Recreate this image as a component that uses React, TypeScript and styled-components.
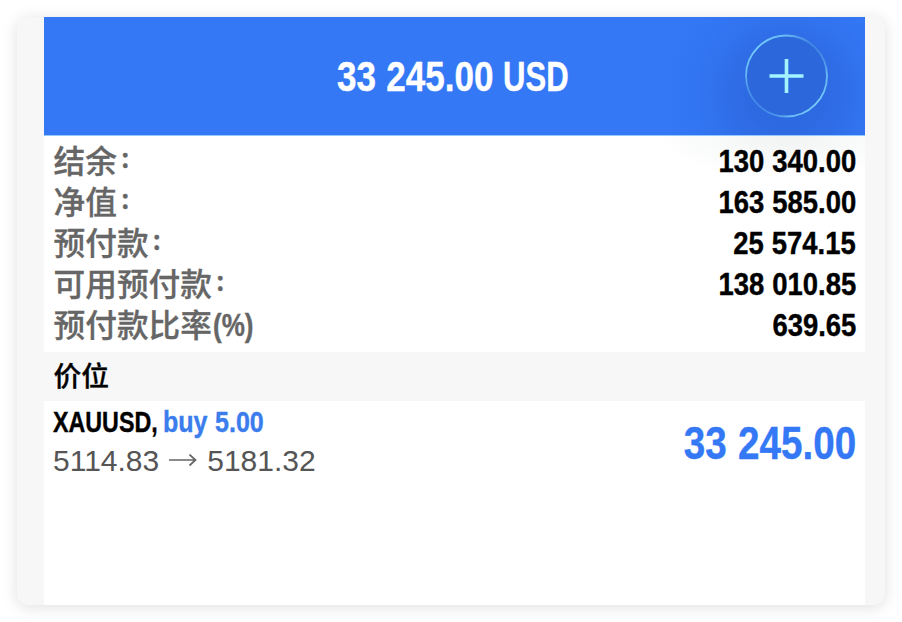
import React from 'react';
import styled, { createGlobalStyle } from 'styled-components';

const GlobalStyle = createGlobalStyle`
  * { box-sizing: border-box; }
  body { margin: 0; background: #fff; font-family: "Liberation Sans", "Noto Sans CJK SC", sans-serif; }
`;

const Page = styled.div`
  width: 902px;
  height: 622px;
  padding: 17px;
  overflow: hidden;
`;

const Card = styled.main`
  width: 868px;
  height: 588px;
  padding: 0 20px 0 27px;
  border-radius: 12px;
  background: #f7f7f7;
  box-shadow: 0 2px 16px rgba(0, 0, 0, 0.13);
`;

const Screen = styled.div`
  height: 588px;
  background: #fff;
`;

const Header = styled.header`
  display: grid;
  grid-template-columns: 150px 1fr 150px;
  align-items: center;
  height: 119px;
  border-bottom: 1px solid #93c8ff;
  background: radial-gradient(circle at 742px 76px, #2c68de 0, #2d69e0 30px, #2f6de7 56px, #3274f0 84px, #3478f6 120px);
`;

const Condensed = styled.span<{ $size: number; $scale: number; $origin?: string; $color?: string; $width?: number }>`
  display: inline-block;
  width: ${p => (p.$width ? `${p.$width}px` : 'auto')};
  font: bold ${p => p.$size}px/1 "Liberation Sans", sans-serif;
  color: ${p => p.$color ?? '#000'};
  white-space: pre;
  word-spacing: 0.6px;
  -webkit-text-stroke: 0.4px currentColor;
  transform: scaleX(${p => p.$scale});
  transform-origin: ${p => p.$origin ?? 'left'} center;
`;

const Title = styled.h1`
  grid-column: 2;
  margin: 1px 0 0 -11px;
  display: flex;
  justify-content: center;
  gap: 9px;
`;

const AddButton = styled.button`
  justify-self: end;
  width: 84px;
  height: 84px;
  margin-right: 36px;
  padding: 0;
  border: 0;
  background: none;
  svg { display: block; }
`;

const Summary = styled.section`
  height: 216px;
  padding: 5px 9px 0;
  background: radial-gradient(ellipse 130px 42px at 742px 0, #f1f3f3, #fff);
`;

const SummaryRow = styled.div`
  display: flex;
  justify-content: space-between;
  align-items: center;
  height: 41px;
`;

const Label = styled.span`
  display: flex;
  align-items: center;
  margin: -5px 0 0 0.5px;
  font: 500 31.7px/32px "Noto Sans CJK SC", sans-serif;
  color: #666;
  -webkit-text-stroke: 0.3px currentColor;
`;

const Suffix = styled.span`
  display: flex;
  margin: 4px 0 0 1px;
`;

const Colon = styled.span`
  margin: -2px 0 0 3px;
  font-size: 21px;
  font-weight: 900;
  line-height: 28px;
`;

const SectionTitle = styled.h2`
  height: 49px;
  margin: 0;
  padding: 0 9.5px;
  background: #f7f7f7;
  font: 500 27.8px/45px "Noto Sans CJK SC", sans-serif;
  color: #000;
  -webkit-text-stroke: 0.3px currentColor;
`;

const Position = styled.section`
  display: flex;
  justify-content: space-between;
  align-items: center;
  height: 84px;
  padding: 0 9px;
`;

const Details = styled.div`
  display: flex;
  flex-direction: column;
  margin-top: -4px;
`;

const Line = styled.div`
  display: flex;
  align-items: center;
  height: 39px;
`;

const Symbol = styled(Line)`
  gap: 5px;
`;

const Prices = styled(Line)`
  gap: 10px;
  font-size: 30px;
  color: #555;
`;

const rows = [
  { label: '结余', value: '130 340.00' },
  { label: '净值', value: '163 585.00' },
  { label: '预付款', value: '25 574.15' },
  { label: '可用预付款', value: '138 010.85' },
  { label: '预付款比率', suffix: '(%)', value: '639.65' },
];

const PlusCircle = () => (
  <svg width="84" height="84" viewBox="0 0 84 84" fill="none">
    <defs>
      <linearGradient id="ring" x1="12" y1="72" x2="72" y2="12" gradientUnits="userSpaceOnUse">
        <stop offset="0" stopColor="#3d82e6" />
        <stop offset=".2" stopColor="#69bdf5" />
        <stop offset=".5" stopColor="#78cefa" />
        <stop offset=".85" stopColor="#66b9f4" />
        <stop offset="1" stopColor="#397bdf" />
      </linearGradient>
    </defs>
    <circle cx="41.500" cy="42" r="40.500" fill="#2c67dc" stroke="url(#ring)" strokeWidth="1.8" />
    <path d="M24.500 42h34M41.500 25v34" stroke="#a3f4ff" strokeWidth="3.6" />
  </svg>
);

const Arrow = () => (
  <svg width="28" height="14" viewBox="0 0 28 14" fill="none" stroke="#666" strokeWidth="1.7">
    <path d="M0 6h26.500M20.500 .5l6 5.500l-6 5.500" />
  </svg>
);

export default function App() {
  return (
    <>
      <GlobalStyle />
      <Page>
        <Card>
          <Screen>
            <Header>
              <Title>
                <Condensed $size={42} $scale={0.835} $origin="right" $color="#fff">33 245.00</Condensed>
                <Condensed $size={42} $scale={0.74} $color="#fff">USD</Condensed>
              </Title>
              <AddButton aria-label="add"><PlusCircle /></AddButton>
            </Header>
            <Summary>
              {rows.map(row => (
                <SummaryRow key={row.label}>
                  <Label>
                    {row.label}
                    {row.suffix
                      ? <Suffix><Condensed $size={31} $scale={0.84} $color="#666">{row.suffix}</Condensed></Suffix>
                      : <Colon>：</Colon>}
                  </Label>
                  <Condensed $size={31.5} $scale={0.871} $origin="right">{row.value}</Condensed>
                </SummaryRow>
              ))}
            </Summary>
            <SectionTitle>价位</SectionTitle>
            <Position>
              <Details>
                <Symbol>
                  <Condensed $size={30} $scale={0.775} $width={105}>XAUUSD,</Condensed>
                  <Condensed $size={30} $scale={0.835} $color="#3b7ded">buy 5.00</Condensed>
                </Symbol>
                <Prices><span>5114.83</span><Arrow /><span>5181.32</span></Prices>
              </Details>
              <Condensed $size={46} $scale={0.84} $origin="right" $color="#3478f6">33 245.00</Condensed>
            </Position>
          </Screen>
        </Card>
      </Page>
    </>
  );
}
